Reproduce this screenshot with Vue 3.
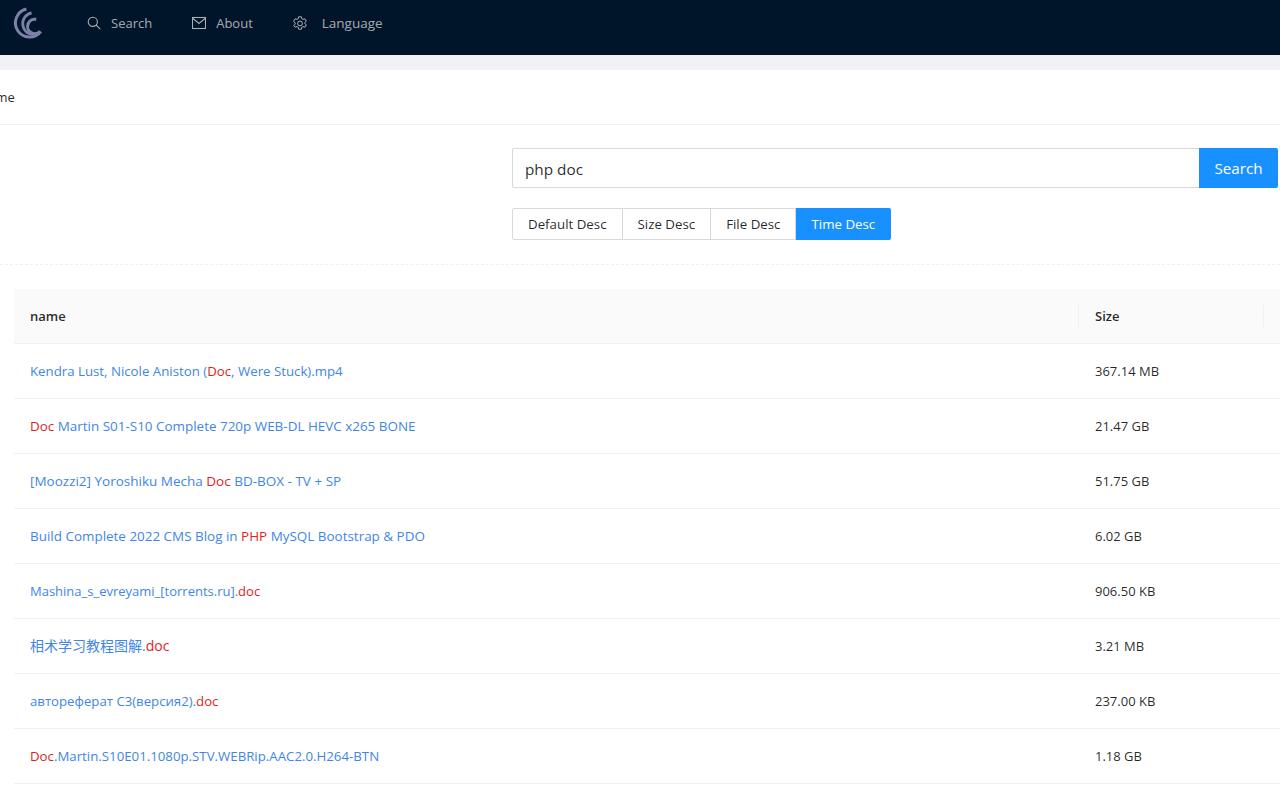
<script setup>
const rows = [
  { fs: 13.25, parts: [['Kendra Lust, Nicole Aniston (', 0], ['Doc', 1], [', Were Stuck).mp4', 0]], size: '367.14 MB' },
  { fs: 13.45, parts: [['Doc', 1], [' Martin S01-S10 Complete 720p WEB-DL HEVC x265 BONE', 0]], size: '21.47 GB' },
  { fs: 13.5, parts: [['[Moozzi2] Yoroshiku Mecha ', 0], ['Doc', 1], [' BD-BOX - TV + SP', 0]], size: '51.75 GB' },
  { fs: 13.45, parts: [['Build Complete 2022 CMS Blog in ', 0], ['PHP', 1], [' MySQL Bootstrap & PDO', 0]], size: '6.02 GB' },
  { fs: 13, parts: [['Mashina_s_evreyami_[torrents.ru].', 0], ['doc', 1]], size: '906.50 KB' },
  { fs: 14, parts: [['相术学习教程图解.', 0], ['doc', 1]], size: '3.21 MB' },
  { fs: 13.2, parts: [['автореферат С3(версия2).', 0], ['doc', 1]], size: '237.00 KB' },
  { fs: 13.25, parts: [['Doc', 1], ['.Martin.S10E01.1080p.STV.WEBRip.AAC2.0.H264-BTN', 0]], size: '1.18 GB' }
]
const sorts = ['Default Desc', 'Size Desc', 'File Desc', 'Time Desc']
</script>

<template>
  <div class="page">
    <header class="top">
      <svg class="logo" width="30" height="34" viewBox="0 0 30 34" fill="none" stroke="#7d80a8">
        <path d="M14.4 3A14.2 14.2 0 1 0 28.8 25.6" stroke-width="3" />
        <path d="M19.6 7A10.8 10.8 0 1 0 28.6 25.8" stroke-width="2.8" />
        <path d="M24.2 13.4A7.2 7.2 0 1 0 28.2 25.2" stroke-width="3.2" />
      </svg>
      <nav class="menu">
        <a class="item">
          <svg width="14" height="14" viewBox="0 0 14 14" fill="none" stroke="currentColor" stroke-width="1.1">
            <circle cx="5.8" cy="5.8" r="4.6" /><path d="M9.2 9.2L13.2 13.2" />
          </svg>
          Search
        </a>
        <a class="item">
          <svg width="14" height="14" viewBox="0 0 14 14" fill="none" stroke="currentColor" stroke-width="1.1">
            <rect x="0.5" y="1.5" width="13" height="11" /><path d="M1 2.5L7 7.5L13 2.5" />
          </svg>
          About
        </a>
        <a class="item wide">
          <svg width="14" height="14" viewBox="0 0 14 14" fill="none" stroke="currentColor" stroke-width="1">
            <path d="M5.6.8h2.8l.4 1.9 1.2.7 1.9-.6 1.4 2.4-1.5 1.3v1l1.5 1.3-1.4 2.4-1.9-.6-1.2.7-.4 1.9H5.6l-.4-1.9-1.2-.7-1.9.6L.7 9.5l1.5-1.3v-1L.7 5.2l1.4-2.4 1.9.6 1.2-.7z" />
            <circle cx="7" cy="7.5" r="2.4" />
          </svg>
          Language
        </a>
      </nav>
    </header>
    <div class="band"></div>
    <main class="sheet">
      <div class="crumb"><span>Home</span></div>
      <section class="search">
        <div class="bar">
          <input class="field" value="php doc" />
          <button class="go">Search</button>
        </div>
        <div class="sorts">
          <span v-for="(s, i) in sorts" :key="s" class="sort" :class="{ on: i === 3 }">{{ s }}</span>
        </div>
      </section>
      <div class="rule"></div>
      <div class="table">
        <div class="row head">
          <div class="name">name</div>
          <div class="size sep">Size</div>
          <div class="rest sep"></div>
        </div>
        <div v-for="r in rows" :key="r.size" class="row">
          <div class="name">
            <a class="link" :style="{ fontSize: r.fs + 'px' }"><span v-for="(p, i) in r.parts" :key="i" :class="{ hit: p[1] }">{{ p[0] }}</span></a>
          </div>
          <div class="size">{{ r.size }}</div>
          <div class="rest"></div>
        </div>
      </div>
    </main>
  </div>
</template>

<style>
html, body { margin: 0; overflow: hidden; background: #fff; }
</style>

<style scoped>
.page {
  width: 1280px;
  height: 800px;
  overflow: hidden;
  font-family: "Open Sans", "Noto Sans CJK SC", sans-serif;
  font-size: 13px;
  color: rgba(0, 0, 0, 0.85);
}
.top {
  height: 55px;
  background: #001529;
  display: flex;
  align-items: center;
  padding-left: 12px;
}
.logo { flex: none; margin-top: -9px; }
.menu { display: flex; margin-left: 45px; margin-top: -10px; }
.item {
  display: flex;
  align-items: center;
  gap: 10px;
  color: rgba(255, 255, 255, 0.65);
  margin-right: 40px;
}
.item.wide { gap: 14px; font-size: 13.5px; padding-left: 0; }
.item.wide svg { margin-right: 1px; }
.band { height: 15px; background: #f0f2f5; }
.crumb {
  height: 54px;
  line-height: 54px;
  border-bottom: 1px solid #f0f0f0;
  overflow: hidden;
}
.crumb span { display: block; margin-left: -22px; }
.search { padding: 23px 2px 0 512px; }
.bar { display: flex; height: 40px; }
.field {
  flex: 1;
  min-width: 0;
  box-sizing: border-box;
  border: 1px solid #d9d9d9;
  border-right: 0;
  border-radius: 2px 0 0 2px;
  padding: 2px 12px 0;
  font: inherit;
  font-size: 15.3px;
  color: rgba(0, 0, 0, 0.85);
  outline: none;
}
.go {
  width: 79px;
  border: 0;
  border-radius: 0 2px 2px 0;
  background: #1890ff;
  color: #fff;
  font: inherit;
  font-size: 15.2px;
  padding: 0;
}
.sorts { display: flex; margin-top: 20px; font-size: 13.3px; }
.sort {
  box-sizing: border-box;
  height: 32px;
  line-height: 30px;
  padding: 0 15px;
  border: 1px solid #d9d9d9;
  border-left: 0;
  background: #fff;
}
.sort:first-child { border-left: 1px solid #d9d9d9; border-radius: 2px 0 0 2px; }
.sort:last-child { border-radius: 0 2px 2px 0; }
.sort.on { background: #1890ff; border-color: #1890ff; color: #fff; }
.rule { margin-top: 24px; border-top: 1px dashed #f0f0f0; }
.table { margin: 24px 0 0 14px; }
.row {
  display: grid;
  grid-template-columns: 1064px 185px 1fr;
  height: 55px;
  line-height: 20px;
  align-items: center;
  border-bottom: 1px solid #f0f0f0;
  box-sizing: border-box;
}
.head { background: #fafafa; font-weight: 600; }
.name { padding-left: 16px; }
.size { padding-left: 17px; }
.sep { position: relative; }
.sep::before {
  content: "";
  position: absolute;
  left: 0;
  top: 50%;
  height: 22px;
  margin-top: -11px;
  border-left: 1px solid #f0f0f0;
}
.link { color: #3f86e6; }
.hit { color: #dd1f24; }
</style>
